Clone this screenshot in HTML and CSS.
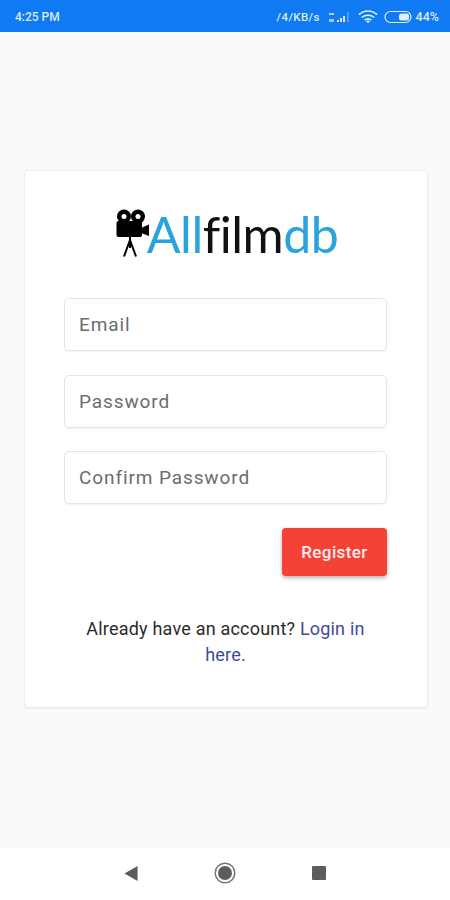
FILE: index.html
```html
<!DOCTYPE html>
<html lang="en">
<head>
<meta charset="utf-8">
<title>Allfilmdb Register</title>
<link rel="stylesheet" href="styles.css">
</head>
<body>
<div class="status">
  <span class="time">4:25 PM</span>
  <div class="status-right">
    <span class="speed">/4/KB/s</span>
    <svg class="signal" width="22" height="12" viewBox="0 0 22 12"><path d="M9 9h2v2H9zM12 7h2v4h-2zM15 5h2v6h-2z" fill="#d5e6fb"/><path d="M19.500 1h1v10h-1z" fill="#8fbdf5"/><path d="M1 2h5v2H1zM1 8h5v3H1z" fill="#a9cdf8"/></svg>
    <svg class="wifi" width="20" height="14" viewBox="0 0 21 14"><path d="M1 4.500C6.500-.5 14.500-.5 20 4.500M4 7.500C7.500 4.300 13.500 4.300 17 7.500M7 10.300C9 8.700 12 8.700 14 10.300" fill="none" stroke="#e3eefd" stroke-width="1.700"/><path d="M10.500 13.500l-2-2a3 3 0 0 1 4 0z" fill="#e3eefd"/></svg>
    <svg class="battery" width="29" height="14" viewBox="0 0 29 14"><rect x="1" y="1.500" width="26" height="11" rx="5.500" fill="none" stroke="#e3eefd" stroke-width="1.200"/><rect x="15" y="3.500" width="10" height="7" rx="2.500" fill="#e3eefd"/></svg>
    <span class="pct">44%</span>
  </div>
</div>
<main class="main">
  <section class="card">
    <div class="logo">
      <svg class="camera" width="34" height="48" viewBox="0 0 34 48">
        <circle cx="8" cy="7.500" r="7" fill="#000"/><circle cx="8" cy="7.500" r="2.500" fill="#fff"/>
        <circle cx="22" cy="7.500" r="7" fill="#000"/><circle cx="22" cy="7.500" r="2.500" fill="#fff"/>
        <rect x="0.500" y="12" width="25.500" height="16" rx="2" fill="#000"/>
        <path d="M25 19l8-3.500v11.500l-8-3z" fill="#000"/>
        <path d="M14 27v5M14 31L8 47.500M14 31L20 47.500M14 31v8" stroke="#000" stroke-width="2" fill="none"/>
      </svg>
      <span class="wordmark"><span class="blue">All</span><span class="black">film</span><span class="blue">db</span></span>
    </div>
    <form class="form">
      <input class="field" type="text" placeholder="Email">
      <input class="field" type="password" placeholder="Password">
      <input class="field" type="password" placeholder="Confirm Password">
      <div class="actions"><button class="btn" type="button">Register</button></div>
    </form>
    <p class="note">Already have an account? <a class="link" href="#">Login in here.</a></p>
  </section>
</main>
<nav class="nav">
  <svg width="14" height="15" viewBox="0 0 14 16"><path d="M14 0v16L0 8z" fill="#5c5c5c"/></svg>
  <svg width="22" height="22" viewBox="0 0 22 22"><circle cx="11" cy="11" r="9.800" fill="none" stroke="#777" stroke-width="1.500"/><circle cx="11" cy="11" r="7" fill="#5c5c5c"/></svg>
  <svg width="14" height="14" viewBox="0 0 14 14"><rect width="14" height="14" rx="1" fill="#5c5c5c"/></svg>
</nav>
</body>
</html>
```
FILE: styles.css
```css
* { box-sizing: border-box; }
html, body { margin: 0; padding: 0; }
body {
  width: 450px;
  height: 900px;
  display: flex;
  flex-direction: column;
  background: #fafafa;
  font-family: Roboto, "Liberation Sans", sans-serif;
  overflow: hidden;
}
.status {
  height: 32px;
  flex: none;
  background: #107af2;
  color: #dbe9fc;
  display: flex;
  align-items: center;
  justify-content: space-between;
  padding: 1px 11px 0 15px;
  font-size: 12px;
  font-weight: 500;
}
.status-right { display: flex; align-items: center; }
.speed { font-size: 11.500px; letter-spacing: .4px; width: 45px; margin-right: 6px; white-space: nowrap; }
.signal { margin-right: 8px; }
.wifi { margin-right: 6px; }
.battery { margin-right: 3px; }
.pct { font-size: 12.500px; }
.main {
  flex: 1;
  padding: 138px 22px 0 24px;
}
.card {
  width: 404px;
  height: 538px;
  background: #fff;
  border: 1px solid #ececec;
  border-radius: 4px;
  box-shadow: 0 1px 2px rgba(0,0,0,.05);
  padding: 37px 40px 0 39px;
}
.logo {
  height: 52px;
  display: flex;
  align-items: flex-end;
  justify-content: center;
  padding-left: 3px;
}
.camera { margin-right: -3px; margin-bottom: 3px; flex: none; }
.wordmark {
  font-family: Lato, "Open Sans", sans-serif;
  font-weight: 400;
  font-size: 50px;
  line-height: 52px;
  letter-spacing: -0.500px;
}
.blue { color: #29a3dc; }
.black { color: #111; }
.form {
  margin-top: 38px;
  display: flex;
  flex-direction: column;
  gap: 23.500px;
}
.field {
  display: block;
  width: 323px;
  height: 53px;
  padding: 0 14px;
  border: 1px solid #e4e4e4;
  border-radius: 5px;
  background: #fff;
  box-shadow: 0 1px 2px rgba(0,0,0,.06);
  font-family: inherit;
  font-size: 19px;
  letter-spacing: .9px;
  color: #666;
  outline: none;
}
.field::placeholder { color: #6c6c6c; opacity: 1; }
.actions { display: flex; justify-content: flex-end; margin-top: .500px; }
.btn {
  width: 105px;
  height: 48px;
  background: #f44336;
  color: #fdeeed;
  border: 0;
  border-radius: 4px;
  box-shadow: 0 2px 4px rgba(0,0,0,.3);
  font-family: inherit;
  font-size: 17px;
  letter-spacing: .4px;
  font-weight: 500;
}
.note {
  margin: 40px 0 0;
  padding: 0 8px;
  text-align: center;
  font-size: 18px;
  letter-spacing: .2px;
  line-height: 26px;
  color: #2a2a2a;
}
.link { color: #3f4a9e; text-decoration: none; }
.nav {
  height: 52px;
  flex: none;
  background: #fff;
  display: flex;
  align-items: center;
  justify-content: center;
  gap: 76px;
  padding-bottom: 2px;
}
```
